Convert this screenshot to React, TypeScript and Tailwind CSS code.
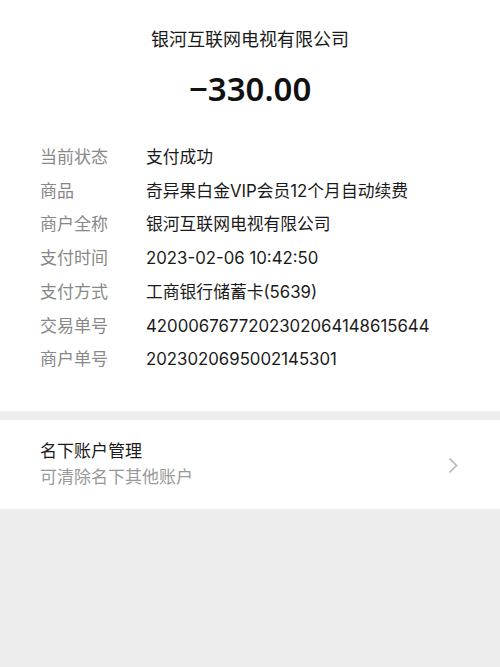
import React from 'react'

const rows: [string, string][] = [
  ['当前状态', '支付成功'],
  ['商品', '奇异果白金VIP会员12个月自动续费'],
  ['商户全称', '银河互联网电视有限公司'],
  ['支付时间', '2023-02-06 10:42:50'],
  ['支付方式', '工商银行储蓄卡(5639)'],
  ['交易单号', '4200067677202302064148615644'],
  ['商户单号', '2023020695002145301'],
]

const App = () => {
  return (
    <div className="min-h-[667px] bg-[#ededed] font-['Inter','Noto_Sans_CJK_SC',sans-serif]">
      {/* bill detail */}
      <div className="bg-white pt-[27px] pb-[34px]">
        <div className="text-center text-[18px] leading-[26px] text-[#1a1a1a]">
          银河互联网电视有限公司
        </div>
        <div className="mt-[14px] text-center font-['Noto_Sans',sans-serif] text-[33px] leading-[44px] font-semibold text-[#111]">
          −330.00
        </div>
        <div className="mt-[30px] flex flex-col px-10">
          {rows.map(([label, value]) => (
            <div key={label} className="flex text-[17px] leading-[33.7px]">
              <span className="w-[106px] shrink-0 text-[#888]">{label}</span>
              <span className="text-[16.8px] text-[#1a1a1a]">{value}</span>
            </div>
          ))}
        </div>
      </div>

      {/* account management */}
      <div className="mt-[9px] flex h-[89px] items-center bg-white pl-10 pr-[42px]">
        <div className="flex flex-1 flex-col">
          <span className="text-[17px] leading-[26px] text-[#1a1a1a]">名下账户管理</span>
          <span className="text-[17px] leading-[26px] text-[#999]">可清除名下其他账户</span>
        </div>
        <svg width="10" height="17" viewBox="0 0 10 17" className="mt-[2px]">
          <path d="M1.5 1.5 L8.5 8.5 L1.5 15.5" fill="none" stroke="#b5b5b5" strokeWidth="1.6" />
        </svg>
      </div>
    </div>
  )
}

export default App
